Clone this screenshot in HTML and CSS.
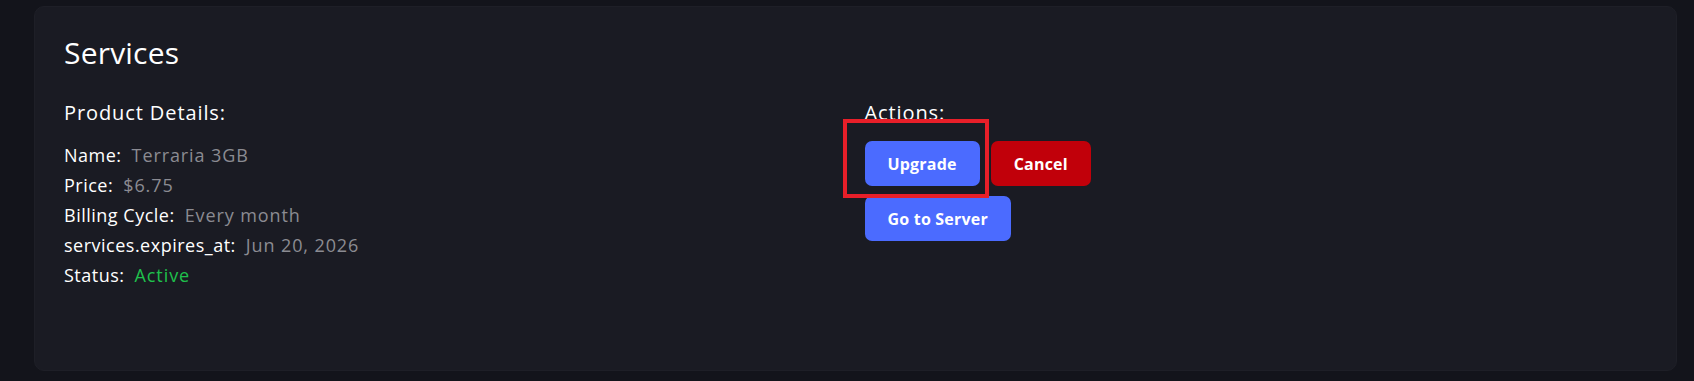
FILE: index.html
```html
<!DOCTYPE html>
<html>
<head>
<meta charset="utf-8">
<link rel="stylesheet" href="styles.css">
</head>
<body>
<div class="card">
  <h1 class="title">Services</h1>
  <div class="cols">
    <section class="col">
      <h2 class="subtitle">Product Details:</h2>
      <div class="details">
        <div class="row"><span class="label">Name:</span><span class="value">Terraria 3GB</span></div>
        <div class="row"><span class="label">Price:</span><span class="value">$6.75</span></div>
        <div class="row"><span class="label">Billing Cycle:</span><span class="value">Every month</span></div>
        <div class="row"><span class="label">services.expires_at:</span><span class="value">Jun 20, 2026</span></div>
        <div class="row"><span class="label">Status:</span><span class="value active">Active</span></div>
      </div>
    </section>
    <section class="col">
      <h2 class="subtitle">Actions:</h2>
      <div class="actions">
        <div class="btn-row">
          <span class="highlight-wrap">
            <button class="btn btn-blue">Upgrade</button>
            <span class="highlight"></span>
          </span>
          <button class="btn btn-red">Cancel</button>
        </div>
        <div class="btn-row">
          <button class="btn btn-blue">Go to Server</button>
        </div>
      </div>
    </section>
  </div>
</div>
</body>
</html>
```
FILE: styles.css
```css
* { box-sizing: border-box; }
html, body { height: 100%; }
body {
  margin: 0;
  background: #13141b;
  padding: 6px 17px 10px 34px;
  font-family: "Open Sans", "Noto Sans", sans-serif;
  color: #ffffff;
}
.card {
  height: 365px;
  background: #1a1b23;
  border: 1px solid #1e1f27;
  border-radius: 10px;
  padding: 26px 29px;
}
.title {
  margin: 0;
  font-size: 30px;
  font-weight: 500;
  line-height: 40px;
  letter-spacing: 0.2px;
}
.cols {
  display: grid;
  grid-template-columns: 1fr 1fr;
  column-gap: 18px;
  margin-top: 26px;
}
.subtitle {
  margin: 0;
  font-size: 20px;
  font-weight: 500;
  line-height: 28px;
  letter-spacing: 0.9px;
}
.details {
  margin-top: 13px;
  font-size: 18px;
  line-height: 30px;
}
.row { display: flex; gap: 10px; }
.label { color: #ffffff; font-weight: 500; letter-spacing: 0.5px; }
.value { color: #8b8b92; letter-spacing: 0.9px; }
.value.active { color: #1fc04c; font-weight: 500; }
.actions {
  margin-top: 14px;
  display: flex;
  flex-direction: column;
  gap: 10px;
}
.btn-row { display: flex; gap: 11px; }
.highlight-wrap { position: relative; display: inline-flex; }
.highlight {
  position: absolute;
  left: -22px;
  top: -22px;
  width: 146px;
  height: 79px;
  border: 4px solid #e81f29;
  pointer-events: none;
}
.btn {
  height: 45px;
  padding: 0 23px;
  border: none;
  border-radius: 7px;
  font-family: inherit;
  font-size: 16px;
  font-weight: 700;
  letter-spacing: 0.2px;
  color: #ffffff;
  cursor: pointer;
}
.btn-blue { background: #4b6bff; }
.btn-red { background: #c1000a; }
```
